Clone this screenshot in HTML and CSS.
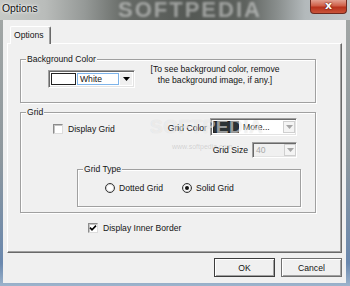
FILE: index.html
```html
<!DOCTYPE html>
<html>
<head>
<meta charset="utf-8">
<title>Options</title>
<link rel="stylesheet" href="styles.css">
</head>
<body>
<div class="window">
  <div class="titlebar">
    <span class="title">Options</span>
    <span class="wm-title">SOFTPEDIA</span>
    <div class="close"><span>x</span></div>
  </div>
  <div class="client">
    <div class="tabs"><div class="tab">Options</div></div>
    <div class="panel">
      <div class="group bg">
        <span class="legend">Background Color</span>
        <div class="bg-row">
          <div class="combo c-bg">
            <span class="swatch sw-white"></span>
            <span class="cfield focus">White</span>
            <span class="cdrop"><svg width="7" height="4" viewBox="0 0 7 4"><path d="M0 0h7L3.5 4z" fill="#000"/></svg></span>
          </div>
          <p class="note">[To see background color, remove<br>the background image, if any.]</p>
        </div>
      </div>
      <div class="group grid">
        <span class="legend">Grid</span>
        <div class="row r1">
          <label class="check dg"><span class="box"></span>Display Grid</label>
          <span class="lbl lbl-color">Grid Color</span>
          <div class="combo c-color">
            <span class="swatch sw-dark"></span>
            <span class="cfield">More...</span>
            <span class="cdrop dis"><svg width="7" height="4" viewBox="0 0 7 4"><path d="M0 0h7L3.5 4z" fill="#a6a6a6"/></svg></span>
          </div>
        </div>
        <div class="row r2">
          <span class="lbl lbl-size">Grid Size</span>
          <div class="combo c-size">
            <span class="cfield disabled">40</span>
            <span class="cdrop dis"><svg width="7" height="4" viewBox="0 0 7 4"><path d="M0 0h7L3.5 4z" fill="#a6a6a6"/></svg></span>
          </div>
        </div>
        <div class="group gtype">
          <span class="legend">Grid Type</span>
          <div class="radios">
            <label class="radio r-dotted"><span class="ring"></span>Dotted Grid</label>
            <label class="radio"><span class="ring on"></span>Solid Grid</label>
          </div>
        </div>
      </div>
      <label class="check inner"><span class="box"><svg width="8" height="8" viewBox="0 0 8 8"><path d="M1 3.6 3 5.8 7 1.6" fill="none" stroke="#000" stroke-width="1.6"/></svg></span>Display Inner Border</label>
    </div>
    <div class="buttons">
      <button class="btn default">OK</button>
      <button class="btn">Cancel</button>
    </div>
  </div>
  <div class="wm-mid">SOFTPEDIA</div>
  <div class="wm-url">www.softpedia.com</div>
</div>
</body>
</html>
```

FILE: styles.css
```css
* { box-sizing: border-box; }
html, body { margin: 0; padding: 0; }
body {
  width: 350px;
  height: 286px;
  overflow: hidden;
  font-family: "Liberation Sans", Arial, sans-serif;
  font-size: 8.6px;
  color: #141414;
}
.window {
  position: relative;
  width: 350px;
  height: 286px;
  display: flex;
  flex-direction: column;
  background: linear-gradient(to bottom, #a4a8a6 0%, #8e989e 55%, #6a88ae 92%, #9db4cc 100%);
}
.titlebar {
  position: relative;
  height: 20px;
  flex: none;
  display: flex;
  align-items: flex-start;
  overflow: hidden;
  background: linear-gradient(to right, #c6c9c6 0px, #b9bcba 45px, #959997 85px, #666a66 125px, #545854 190px, #5e625e 245px, #8a8f8e 278px, #b3b9bb 305px, #c3c9cc 350px);
}
.title {
  margin: 2px 0 0 2px;
  font-size: 10.4px;
  line-height: 13px;
  color: #111;
  text-shadow: 0 0 4px #fff, 0 0 2px #fff;
  position: relative;
  z-index: 1;
}
.wm-title {
  position: absolute;
  left: 118px;
  top: 0;
  font-size: 22px;
  font-weight: bold;
  line-height: 20px;
  letter-spacing: 2px;
  color: rgba(255, 255, 255, 0.42);
  filter: blur(0.8px);
}
.close {
  margin-left: auto;
  margin-right: 3px;
  width: 37px;
  height: 14px;
  border: 1px solid #6e2a20;
  border-top: none;
  border-radius: 0 0 4px 4px;
  background: linear-gradient(to bottom, #e2a090 0%, #cf5f48 45%, #b8321c 55%, #c9543a 100%);
  display: flex;
  align-items: center;
  justify-content: center;
  position: relative;
  z-index: 1;
}
.close span {
  font-family: "DejaVu Sans", sans-serif;
  font-size: 11px;
  font-weight: bold;
  line-height: 11px;
  color: #fff;
  margin-top: -2px;
  text-shadow: 0 0 2px #5a1a10, 0 0 1px #5a1a10;
}
.client {
  width: 343px;
  height: 263px;
  margin-left: 3px;
  background: #f0f0f0;
  padding: 6px 4px 0 4px;
  flex: none;
}
.tabs {
  height: 17px;
  padding-left: 3px;
}
.tab {
  position: relative;
  z-index: 1;
  width: 41px;
  height: 18px;
  background: #f0f0f0;
  border-top: 1px solid #fff;
  border-left: 1px solid #fff;
  border-right: 1px solid #696969;
  box-shadow: inset -1px 0 0 #a0a0a0;
  border-radius: 2px 2px 0 0;
  padding: 3px 0 0 3px;
  line-height: 10px;
}
.panel {
  height: 210px;
  border-top: 1px solid #fff;
  border-left: 1px solid #fff;
  border-right: 1px solid #696969;
  border-bottom: 1px solid #696969;
  box-shadow: inset -1px -1px 0 #a0a0a0;
  display: flex;
  flex-direction: column;
  align-items: flex-start;
}
.group {
  position: relative;
  border: 1px solid #a0a0a0;
  box-shadow: inset 1px 1px 0 #fff, 1px 1px 0 #fff;
}
.legend {
  position: absolute;
  top: -5px;
  left: 5px;
  padding: 0 1px;
  line-height: 9px;
  background: #f0f0f0;
  white-space: nowrap;
}
.bg {
  margin: 15px 0 0 12px;
  width: 296px;
  height: 44px;
}
.bg-row {
  display: flex;
  align-items: flex-start;
  padding-left: 27px;
}
.combo {
  display: flex;
  align-items: stretch;
  border: 1px solid;
  border-color: #a0a0a0 #fff #fff #a0a0a0;
  box-shadow: inset 1px 1px 0 #696969, inset -1px -1px 0 #e3e3e3;
  padding: 2px;
  background: #fff;
  gap: 1px;
}
.c-bg {
  margin-top: 10px;
  width: 87px;
  height: 18px;
}
.swatch {
  flex: none;
  width: 25px;
  border: 1px solid #222;
}
.sw-white { background: #fff; }
.sw-dark { background: #2c3336; width: 26px; }
.cfield {
  flex: none;
  width: 42px;
  line-height: 12px;
  padding-left: 2px;
  background: #fff;
  white-space: nowrap;
}
.cfield.focus {
  border: 1px solid #7eb4ea;
  line-height: 10px;
}
.cdrop {
  flex: 1;
  display: flex;
  align-items: center;
  justify-content: center;
  background: #f0f0f0;
}
.cdrop.dis {
  flex: none;
  width: 12px;
  border: 1px solid #cfcfcf;
  background: #f4f4f4;
}
.note {
  margin: 4px 0 0 12px;
  width: 136px;
  line-height: 10.5px;
  text-align: center;
  white-space: nowrap;
}
.grid {
  margin: 9px 0 0 12px;
  width: 296px;
  height: 101px;
}
.row {
  display: flex;
  align-items: center;
  padding-right: 18px;
}
.r1 {
  margin-top: 5px;
  height: 18px;
}
.r2 {
  margin-top: 6px;
  height: 16px;
  justify-content: flex-end;
}
.check {
  display: flex;
  align-items: center;
  gap: 5px;
  line-height: 10px;
  white-space: nowrap;
}
.dg {
  margin-left: 32px;
  margin-right: auto;
  padding-top: 3px;
}
.box {
  flex: none;
  width: 10px;
  height: 10px;
  border: 1px solid;
  border-color: #8c8c8c #dcdcdc #dcdcdc #8c8c8c;
  box-shadow: inset 1px 1px 0 #c4c4c4;
  background: #fff;
  display: flex;
  align-items: center;
  justify-content: center;
}
.lbl {
  line-height: 10px;
  white-space: nowrap;
}
.lbl-color { margin-right: 3px; padding-top: 2px; }
.lbl-size { margin-right: 4px; }
.c-color {
  width: 87px;
  height: 18px;
}
.c-color .cfield { width: 42px; line-height: 12px; padding-left: 3px; }
.c-size {
  width: 45px;
  height: 16px;
  background: #f0f0f0;
  padding: 1px 2px;
}
.c-size .cfield {
  width: 28px;
  background: #f0f0f0;
  color: #a8a8a8;
  line-height: 12px;
  padding-left: 1px;
}
.gtype {
  margin: 11px 0 0 56px;
  width: 224px;
  height: 38px;
}
.radios {
  display: flex;
  align-items: center;
  margin-top: 12px;
  padding-left: 27px;
  height: 12px;
}
.radio {
  display: flex;
  align-items: center;
  gap: 4px;
  line-height: 10px;
  white-space: nowrap;
}
.r-dotted { width: 77px; }
.ring {
  flex: none;
  width: 10px;
  height: 10px;
  border-radius: 50%;
  border: 1px solid #333;
  background: #fff;
  box-shadow: inset 0 0 0 1px #d8d8d8;
  display: flex;
  align-items: center;
  justify-content: center;
}
.ring.on::after {
  content: "";
  width: 4px;
  height: 4px;
  border-radius: 50%;
  background: #111;
}
.inner {
  margin: 9px 0 0 80px;
  height: 12px;
}
.buttons {
  display: flex;
  justify-content: flex-end;
  gap: 6px;
  margin-top: 5px;
}
.btn {
  width: 61px;
  height: 19px;
  padding: 0;
  font-family: "Liberation Sans", Arial, sans-serif;
  font-size: 8.6px;
  color: #141414;
  background: #f0f0f0;
  border: 1px solid #707070;
  box-shadow: inset 1px 1px 0 #fff, inset -1px -1px 0 #a0a0a0;
  border-radius: 0;
}
.btn.default {
  border-color: #3c3c3c;
}
.wm-mid {
  position: absolute;
  left: 150px;
  top: 117px;
  font-size: 19px;
  font-weight: bold;
  line-height: 20px;
  letter-spacing: 0.5px;
  color: rgba(255, 255, 255, 0.55);
  text-shadow: 0 0 1px rgba(0, 0, 0, 0.12);
  pointer-events: none;
}
.wm-url {
  position: absolute;
  left: 172px;
  top: 143px;
  font-size: 7px;
  line-height: 8px;
  color: rgba(150, 150, 150, 0.35);
  pointer-events: none;
}
```
